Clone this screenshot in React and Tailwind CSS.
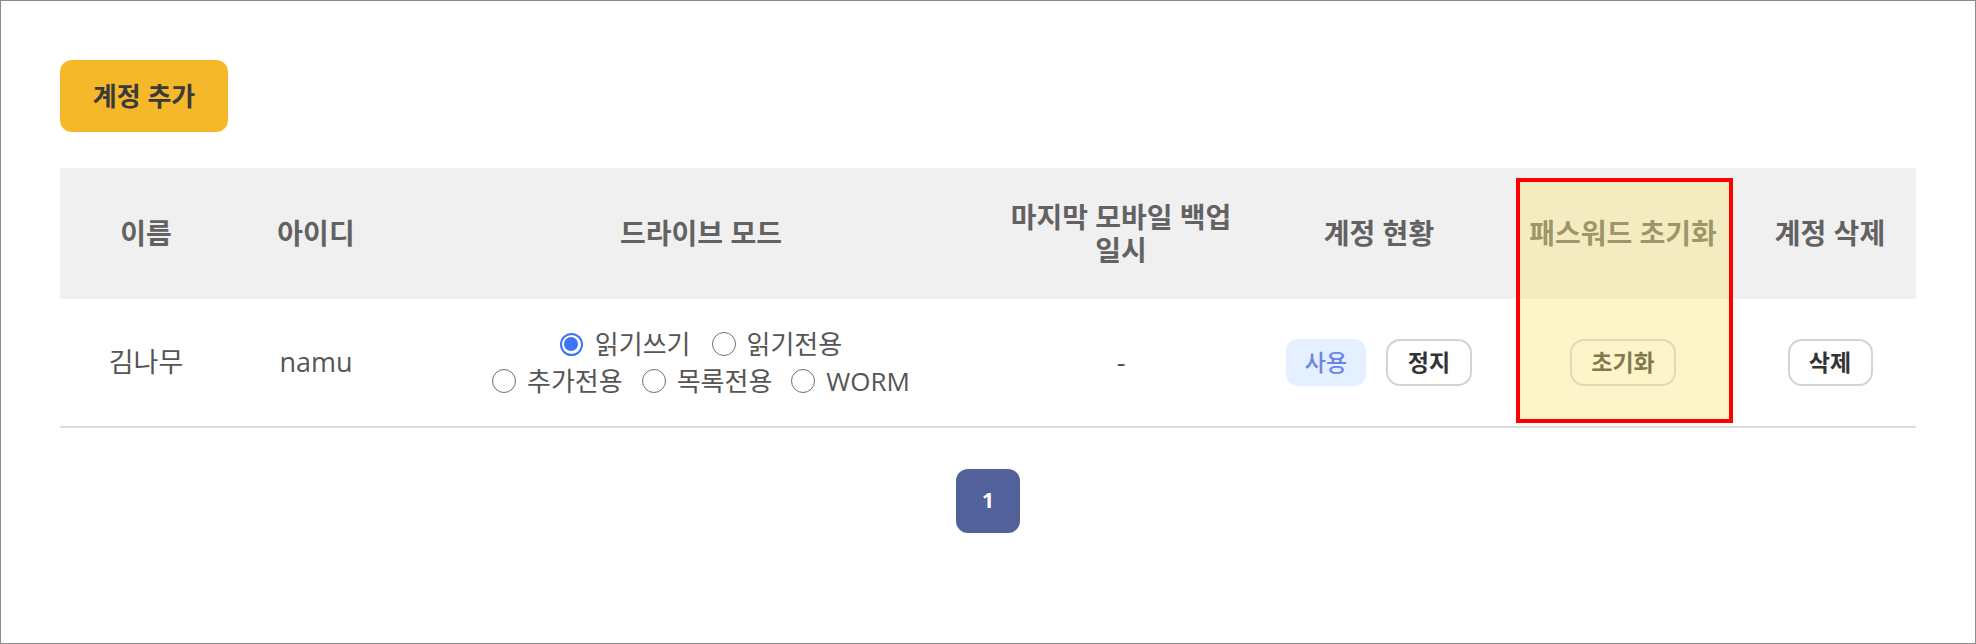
import React from 'react';

const cols = ['w-[172px]', 'w-[168px]', 'w-[602px]', 'w-[238px]', 'w-[278px]', 'w-[210px]', 'w-[188px] pl-4'];

function Radio({ checked, label }) {
  return (
    <span className="inline-flex items-center">
      {checked ? (
        <span className="mr-[12px] flex h-[23px] w-[23px] items-center justify-center rounded-full border-2 border-[#3d74f4] bg-white">
          <span className="h-[14px] w-[14px] rounded-full bg-[#3d74f4]" />
        </span>
      ) : (
        <span className="mr-[11px] h-[24px] w-[24px] rounded-full border-[1.5px] border-[#707070] bg-white" />
      )}
      <span>{label}</span>
    </span>
  );
}

function SmallButton({ children, className = '' }) {
  return (
    <button className={`h-[47px] rounded-[14px] border-2 border-[#cfd4dc] text-[23px] font-bold text-[#333] ${className}`}>
      {children}
    </button>
  );
}

export default function App() {
  const headers = ['이름', '아이디', '드라이브 모드', null, '계정 현황', '패스워드 초기화', '계정 삭제'];

  return (
    <div className="h-[644px] w-[1976px] border border-[#8a8a8a] bg-white px-[59px] pt-[59px] font-['Open_Sans','Noto_Sans_CJK_KR',sans-serif]">
      <button className="h-[72px] w-[168px] rounded-[12px] bg-[#f4b82a] text-[26px] font-bold text-[#3a3a3a]">계정 추가</button>

      <div className="relative mt-[36px]">
        <div className="flex h-[131px] items-center bg-[#f0f0f0] text-[28px] font-bold text-[#626262]">
          {headers.map((h, i) => (
            <div key={i} className={`${cols[i]} flex justify-center text-center leading-[33px]`}>
              {h ?? (<span>마지막 모바일 백업<br />일시</span>)}
            </div>
          ))}
        </div>

        <div className="flex h-[129px] items-center border-b-2 border-[#dcdcdc] text-[27px] text-[#555]">
          <div className={`${cols[0]} text-center`}>김나무</div>
          <div className={`${cols[1]} text-center`}>namu</div>
          <div className={`${cols[2]} flex flex-col items-center text-[26px] leading-[37px]`}>
            <div className="flex gap-x-[21px]">
              <Radio checked label="읽기쓰기" />
              <Radio label="읽기전용" />
            </div>
            <div className="flex gap-x-[19px]">
              <Radio label="추가전용" />
              <Radio label="목록전용" />
              <Radio label="WORM" />
            </div>
          </div>
          <div className={`${cols[3]} text-center`}>-</div>
          <div className={`${cols[4]} flex justify-center gap-[20px]`}>
            <span className="flex h-[47px] w-[80px] items-center justify-center rounded-[12px] bg-[#e4efff] text-[23px] font-medium text-[#6a85e6]">사용</span>
            <SmallButton className="w-[86px]">정지</SmallButton>
          </div>
          <div className={`${cols[5]} flex justify-center`}>
            <SmallButton className="w-[106px]">초기화</SmallButton>
          </div>
          <div className={`${cols[6]} flex justify-center`}>
            <SmallButton className="w-[85px]">삭제</SmallButton>
          </div>
        </div>

        <div className="pointer-events-none absolute left-[1456px] top-[10px] h-[245px] w-[217px] border-4 border-[#f00] bg-[rgba(250,230,120,0.4)]" />
      </div>

      <div className="mt-[41px] flex justify-center">
        <button className="h-[64px] w-[64px] rounded-[12px] bg-[#52619a] text-[21px] font-bold text-white">1</button>
      </div>
    </div>
  );
}
